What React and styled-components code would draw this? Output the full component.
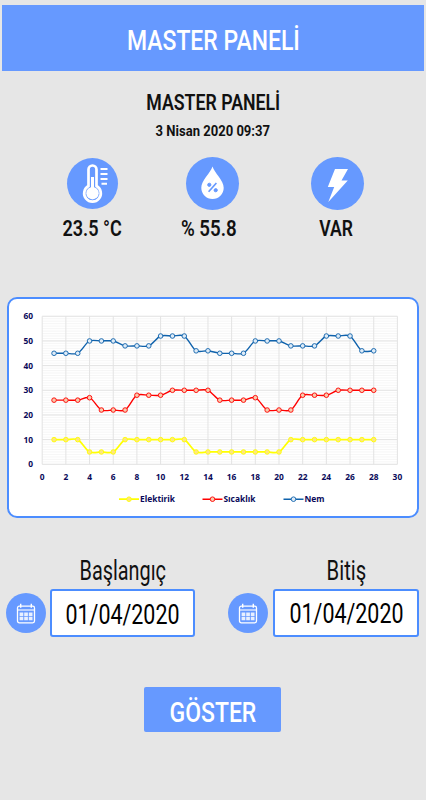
import styled, { createGlobalStyle } from "styled-components";

const GlobalStyle = createGlobalStyle`
  * {
    box-sizing: border-box;
  }
  body {
    margin: 0;
    background: #e6e6e6;
    font-family: Roboto, "Liberation Sans", sans-serif;
    color: #111;
  }
`;

const Page = styled.main`
  width: 426px;
  height: 800px;
  padding: 5px 2px 0;
  display: flex;
  flex-direction: column;
  overflow: hidden;
`;

const Text = styled.span`
  display: block;
  margin: 0;
  white-space: nowrap;
  font-size: ${(p) => p.$size}px;
  line-height: ${(p) => p.$line || p.$size}px;
  font-weight: ${(p) => p.$weight || 500};
  transform: scaleX(${(p) => p.$narrow || 1});
`;

const Header = styled.header`
  height: 66px;
  flex: none;
  padding-top: 6px;
  background: #6699ff;
  color: white;
  display: flex;
  align-items: center;
  justify-content: center;
`;

const Heading = styled.section`
  margin-top: 18px;
  display: flex;
  flex-direction: column;
  align-items: center;
  gap: 2px;
`;

const Readings = styled.section`
  display: grid;
  grid-template-columns: 119px 121px 129px;
  margin: 13px 0 0 31px;
`;

const Reading = styled.div`
  display: flex;
  flex-direction: column;
  align-items: center;
`;

const DiscSlot = styled.div`
  height: 57px;
  display: flex;
  align-items: center;
  padding-bottom: 4px;
`;

const ReadingValue = styled.div`
  margin-right: ${(p) => p.$shift || 0}px;
`;

const Disc = styled.div`
  width: ${(p) => p.$size}px;
  height: ${(p) => p.$size}px;
  flex: none;
  border-radius: 50%;
  background: #6699ff;
  display: flex;
  align-items: center;
  justify-content: center;

  svg {
    display: block;
  }
`;

const ChartCard = styled.section`
  width: 412px;
  height: 221px;
  flex: none;
  margin: 53px 0 0 5px;
  border: 2px solid #4c8dff;
  border-radius: 10px;
  background: white;
  overflow: hidden;

  svg {
    display: block;
  }
`;

const ChartLabel = styled.text`
  font-family: "Noto Sans", "Open Sans", sans-serif;
  font-size: 8.4px;
  font-weight: 700;
  fill: #0a0a5a;
  text-anchor: ${(p) => p.$anchor || "middle"};
`;

const DateRow = styled.section`
  display: grid;
  grid-template-columns: 189px 191px;
  column-gap: 33px;
  margin: 37px 0 0 4px;
`;

const DateField = styled.label`
  display: grid;
  grid-template-columns: 40px minmax(0, 1fr);
  column-gap: ${(p) => p.$gap}px;
  align-items: center;
  justify-items: center;
`;

const FieldName = styled.div`
  grid-column: 2;
  height: 34px;
`;

const DateBox = styled.div`
  width: 100%;
  height: 48px;
  padding-top: ${(p) => p.$drop}px;
  border: 2px solid #4c8dff;
  border-radius: 3px;
  background: white;
  color: #000;
  display: flex;
  align-items: center;
  justify-content: center;
`;

const ShowButton = styled.button`
  width: 137px;
  height: 45px;
  margin: 50px 0 0 142px;
  padding: 6px 0 0;
  border: 0;
  border-radius: 2px;
  background: #6699ff;
  color: white;
  font-family: inherit;
  display: flex;
  align-items: center;
  justify-content: center;
`;

const Thermometer = () => (
  <svg width="51" height="51" viewBox="0 0 51 51" fill="none">
    <path
      d="M21.5 28V11.5a4 4 0 0 1 8 0V28a8.3 8.3 0 1 1-8 0Z"
      stroke="white"
      strokeWidth="2.7"
    />
    <circle cx="25.5" cy="35.2" r="6.2" fill="white" />
    <path d="M25.5 19v15" stroke="white" strokeWidth="3" />
    <path
      d="M33.5 11h7M33.5 16h7M33.5 21h7M34.5 25.7h5.5"
      stroke="white"
      strokeWidth="2.1"
    />
  </svg>
);

const Drop = () => (
  <svg width="53" height="53" viewBox="0 0 53 53">
    <path
      d="M26.5 9.5C28.5 16 37.7 23.5 37.7 30.8a11.2 11.2 0 0 1-22.4 0C15.3 23.5 24.5 16 26.5 9.5Z"
      fill="white"
    />
    <g fill="#6699ff" stroke="#6699ff">
      <path d="M22.6 34.8 30.4 26" strokeWidth="1.7" />
      <circle cx="23.3" cy="27.8" r="1.6" />
      <circle cx="29.7" cy="33.2" r="1.6" />
    </g>
  </svg>
);

const Bolt = () => (
  <svg width="53" height="53" viewBox="0 0 53 53">
    <path d="M24 12h13l-6.5 11.5h6.3L17.3 45l5.9-15h-6.4Z" fill="white" />
  </svg>
);

const Calendar = () => (
  <svg width="20" height="21" viewBox="0 0 20 21" fill="none" stroke="white">
    <rect x="1.5" y="3.2" width="17" height="16.6" rx="1.8" strokeWidth="1.3" />
    <path d="M1.5 7h17" strokeWidth="1.1" />
    <path d="M4.7.8v4M15.3.8v4" strokeWidth="1.4" />
    <path
      d="M3.6 11.2h3.7M8.2 11.2h3.7M12.8 11.2h3.7M3.6 15.6h3.7M8.2 15.6h3.7M12.8 15.6h3.7"
      strokeWidth="3.5"
      opacity="0.85"
    />
  </svg>
);

const series = [
  {
    name: "Elektirik",
    color: "#ffff00",
    dot: "#ffe680",
    width: 1.7,
    legendX: 110,
    values: [
      10, 10, 10, 5, 5, 5, 10, 10, 10, 10, 10, 10, 5, 5, 5, 5, 5, 5, 5, 5, 10,
      10, 10, 10, 10, 10, 10, 10,
    ],
  },
  {
    name: "Sıcaklık",
    color: "#ff0000",
    dot: "#f8cbad",
    width: 1.4,
    legendX: 193.5,
    values: [
      26, 26, 26, 27, 22, 22, 22, 28, 28, 28, 30, 30, 30, 30, 26, 26, 26, 27,
      22, 22, 22, 28, 28, 28, 30, 30, 30, 30,
    ],
  },
  {
    name: "Nem",
    color: "#0f62ac",
    dot: "#deebf7",
    width: 1.4,
    legendX: 274.5,
    values: [
      45, 45, 45, 50, 50, 50, 48, 48, 48, 52, 52, 52, 46, 46, 45, 45, 45, 50,
      50, 50, 48, 48, 48, 52, 52, 52, 46, 46,
    ],
  },
];

const px = (v) => 33.2 + v * 11.84;
const py = (v) => 165.3 - v * 2.467;

const smooth = (values) => {
  const at = (i) => values[Math.max(0, Math.min(values.length - 1, i))];
  let d = `M${px(1)} ${py(values[0])}`;
  for (let i = 0; i < values.length - 1; i++) {
    const c1 = at(i) + (at(i + 1) - at(i - 1)) / 8;
    const c2 = at(i + 1) - (at(i + 2) - at(i)) / 8;
    d += `C${px(i + 1.3)} ${py(c1)} ${px(i + 1.7)} ${py(c2)} ${px(i + 2)} ${py(at(i + 1))}`;
  }
  return d;
};

const range = (n, step) => Array.from({ length: n }, (_, i) => i * step);

const Chart = () => (
  <svg width="408" height="217" viewBox="0 0 408 217">
    {range(61, 1).map((v) => (
      <path key={v} d={`M${px(0)} ${py(v)}H${px(30)}`} stroke="#f4f4f4" strokeWidth="0.8" />
    ))}
    {range(7, 10).map((v) => (
      <g key={v}>
        <path d={`M${px(0)} ${py(v)}H${px(30)}`} stroke="#e3e3e3" />
        <ChartLabel x="24" y={py(v) + 3} $anchor="end">
          {v}
        </ChartLabel>
      </g>
    ))}
    {range(16, 2).map((v) => (
      <g key={v}>
        <path d={`M${px(v)} ${py(0)}V${py(60)}`} stroke="#e3e3e3" />
        <ChartLabel x={px(v)} y="180.5">
          {v}
        </ChartLabel>
      </g>
    ))}
    {series.map((s) => (
      <g key={s.name} stroke={s.color} strokeWidth={s.width}>
        <path d={smooth(s.values)} fill="none" />
        {s.values.map((v, i) => (
          <circle key={i} cx={px(i + 1)} cy={py(v)} r="2.3" fill={s.dot} strokeWidth="0.9" />
        ))}
        <path d={`M${s.legendX} 200.2h20`} />
        <circle cx={s.legendX + 10} cy="200.2" r="2.3" fill={s.dot} strokeWidth="0.9" />
        <ChartLabel x={s.legendX + 21} y="203.2" $anchor="start" stroke="none">
          {s.name}
        </ChartLabel>
      </g>
    ))}
  </svg>
);

const App = () => {
  return (
    <>
      <GlobalStyle />
      <Page>
        <Header>
          <Text as="h1" $size={28} $narrow={0.82}>
            MASTER PANELİ
          </Text>
        </Header>
        <Heading>
          <Text as="h2" $size={21.5} $line={28} $weight={600} $narrow={0.825}>
            MASTER PANELİ
          </Text>
          <Text $size={15} $line={25} $weight={700} $narrow={0.87}>
            3 Nisan 2020 09:37
          </Text>
        </Heading>
        <Readings>
          <Reading>
            <DiscSlot>
              <Disc $size={51}>
                <Thermometer />
              </Disc>
            </DiscSlot>
            <ReadingValue>
              <Text $size={22} $line={30} $weight={600} $narrow={0.82}>
                23.5 °C
              </Text>
            </ReadingValue>
          </Reading>
          <Reading>
            <DiscSlot>
              <Disc $size={53}>
                <Drop />
              </Disc>
            </DiscSlot>
            <ReadingValue $shift={8}>
              <Text $size={22} $line={30} $weight={600} $narrow={0.85}>
                % 55.8
              </Text>
            </ReadingValue>
          </Reading>
          <Reading>
            <DiscSlot>
              <Disc $size={53}>
                <Bolt />
              </Disc>
            </DiscSlot>
            <ReadingValue $shift={2}>
              <Text $size={22} $line={30} $weight={600} $narrow={0.8}>
                VAR
              </Text>
            </ReadingValue>
          </Reading>
        </Readings>
        <ChartCard>
          <Chart />
        </ChartCard>
        <DateRow>
          <DateField $gap={4}>
            <FieldName>
              <Text $size={27} $line={32} $weight={400} $narrow={0.735}>
                Başlangıç
              </Text>
            </FieldName>
            <Disc $size={40}>
              <Calendar />
            </Disc>
            <DateBox $drop={4}>
              <Text $size={28} $weight={400} $narrow={0.765}>
                01/04/2020
              </Text>
            </DateBox>
          </DateField>
          <DateField $gap={5}>
            <FieldName>
              <Text $size={27} $line={32} $weight={400} $narrow={0.75}>
                Bitiş
              </Text>
            </FieldName>
            <Disc $size={40}>
              <Calendar />
            </Disc>
            <DateBox $drop={2}>
              <Text $size={28} $weight={400} $narrow={0.765}>
                01/04/2020
              </Text>
            </DateBox>
          </DateField>
        </DateRow>
        <ShowButton>
          <Text $size={28} $narrow={0.82}>
            GÖSTER
          </Text>
        </ShowButton>
      </Page>
    </>
  );
};

export default App;
